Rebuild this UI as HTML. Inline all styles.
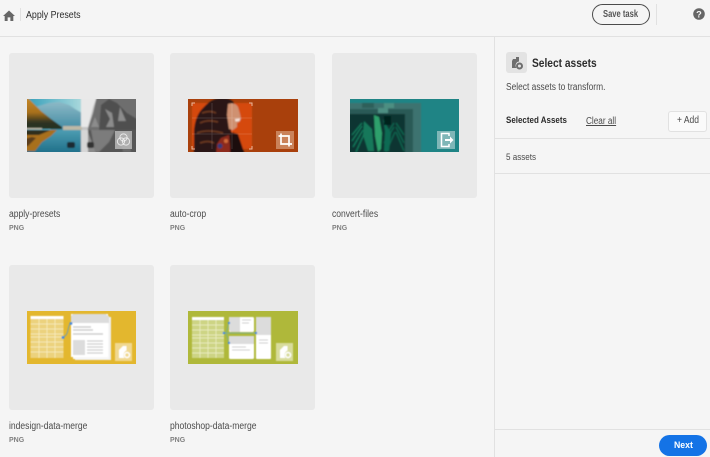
<!DOCTYPE html>
<html><head><meta charset="utf-8"><style>
html,body{margin:0;padding:0;width:710px;height:457px;overflow:hidden;background:#f5f5f5;font-family:"Liberation Sans",sans-serif;color:#2c2c2c}
.a{position:absolute}
.t{position:absolute;white-space:nowrap;line-height:12px;transform-origin:0 50%}
.card{position:absolute;width:145px;height:145px;background:#e9e9e9;border-radius:3px}
.name{position:absolute;white-space:nowrap;font-size:10px;color:#4b4b4b;line-height:12px;transform:scaleX(.855);transform-origin:0 50%}
.png{position:absolute;white-space:nowrap;font-size:7px;font-weight:bold;color:#808080;line-height:10px}
svg{position:absolute;display:block}
</style></head><body>
<div class="a" style="left:0;top:36px;width:710px;height:1px;background:#e1e1e1"></div>
<div class="a" style="left:494px;top:37px;width:1px;height:420px;background:#e1e1e1"></div>
<div class="a" style="left:495px;top:138px;width:215px;height:1px;background:#e1e1e1"></div>
<div class="a" style="left:495px;top:173px;width:215px;height:1px;background:#e1e1e1"></div>
<div class="a" style="left:495px;top:429px;width:215px;height:1px;background:#e1e1e1"></div>
<div class="a" style="left:20px;top:8px;width:1px;height:13px;background:#e1e1e1"></div>
<div class="a" style="left:656px;top:4px;width:1px;height:21px;background:#e1e1e1"></div>

<svg style="left:3px;top:10px" width="12" height="11" viewBox="0 0 13 12"><path d="M6.500 .5L0 6.500h1.800V12h3.200V8h3v4h3.200V6.500H13z" fill="#666"/></svg>
<div class="t" style="left:26px;top:10px;font-size:10px;color:#2c2c2c;transform:scaleX(.885)">Apply Presets</div>

<div class="a" style="left:592px;top:4px;width:56px;height:19px;border:1px solid #4b4b4b;border-radius:11px;background:#f5f5f5"></div>
<div class="t" style="left:603px;top:9px;font-size:10px;font-weight:bold;color:#555;transform:scaleX(.76)">Save task</div>
<svg style="left:693px;top:8px" width="12" height="12" viewBox="0 0 11 11"><circle cx="5.500" cy="5.500" r="5.300" fill="#666"/><text x="5.500" y="8.600" font-family="Liberation Sans" font-size="8.500" font-weight="bold" text-anchor="middle" fill="#f5f5f5">?</text></svg>

<div class="card" style="left:9px;top:53px"></div>
<div class="card" style="left:170px;top:53px"></div>
<div class="card" style="left:332px;top:53px"></div>
<div class="card" style="left:9px;top:265px"></div>
<div class="card" style="left:170px;top:265px"></div>

<!-- apply-presets -->
<svg style="left:27px;top:99px" width="109" height="53" viewBox="0 0 109 53">
<defs><filter id="b1" x="-5%" y="-5%" width="110%" height="110%"><feGaussianBlur stdDeviation=".8"/></filter>
<linearGradient id="sky" x1="0" y1="0" x2="1" y2="0"><stop offset="0" stop-color="#2f9cb8"/><stop offset="1" stop-color="#a9d8dc"/></linearGradient>
<linearGradient id="mt" x1="0" y1="0" x2="0" y2="1"><stop offset="0" stop-color="#8db9c6"/><stop offset="1" stop-color="#3f8aa2"/></linearGradient>
<linearGradient id="w1" x1="0" y1="0" x2="0" y2="1"><stop offset="0" stop-color="#4c9cb2"/><stop offset="1" stop-color="#1a6a85"/></linearGradient>
<linearGradient id="for" x1="0" y1="0" x2="0" y2="1"><stop offset="0" stop-color="#c98a24"/><stop offset=".5" stop-color="#a8701e"/><stop offset=".8" stop-color="#2e3320"/><stop offset="1" stop-color="#23301f"/></linearGradient>
<clipPath id="c1"><rect width="109" height="53"/></clipPath></defs>
<g clip-path="url(#c1)"><g filter="url(#b1)">
<rect x="-3" y="-3" width="58" height="60" fill="url(#sky)"/>
<rect x="54" y="-3" width="58" height="60" fill="#c4c4c4"/>
<path d="M8 8L22 4 32 3l10 3 6 4 7 4v17H24z" fill="url(#mt)"/>
<path d="M-3-3L2 0 14 12 24 20 35 28V30H-3z" fill="url(#for)"/>
<rect x="-3" y="29" width="18" height="1.500" fill="#b8b6a6"/>
<rect x="-3" y="31" width="58" height="25" fill="url(#w1)"/>
<path d="M-3 31H30L24 37 15 43 8 52H-3z" fill="#a8701e"/>
<path d="M-3 31H24L12 36H-3z" fill="#2f2f1f"/>
<path d="M-3 40l8-2 4 1-8 8H-3z" fill="#5a3d1a"/>
<path d="M36 27h19v4H36z" fill="#bdb8a6"/>
<path d="M54-3h16L66 8l-5 20h-7z" fill="#e8e8e8"/>
<path d="M70-3h42v36H60L62 26 66 14z" fill="#6e6e6e"/>
<path d="M74 6l8-6 8 4 10 10 10 6v12H72z" fill="#4f4f4f"/>
<path d="M78 10l5 10-4 8 8 0-2-14zM93 8l6 14h-8zM68 18l4 10h-8z" fill="#8c8c8c"/>
<rect x="54" y="31" width="58" height="25" fill="#8b8b8b"/>
<path d="M60 31h52v25H70z" fill="#565656"/>
<path d="M64 31h24l-6 12-10 10h-4z" fill="#7c7c7c"/>
<path d="M92 33l4 20h8l-2-20z" fill="#6a6a6a"/>
<rect x="54" y="31" width="7" height="25" fill="#d6d6d6"/>
<rect x="40" y="43" width="8" height="6" rx="2" fill="#1c2b33"/>
<rect x="60" y="43" width="7" height="6" rx="2" fill="#333"/>
</g>
<rect x="88" y="32" width="17" height="18" fill="#c9c9c9" fill-opacity=".72"/>
<g fill="none" stroke="#fff" stroke-opacity=".7" stroke-width="1"><circle cx="96.500" cy="38.500" r="3.600"/><circle cx="94" cy="42.500" r="3.600"/><circle cx="99" cy="42.500" r="3.600"/></g>
</g></svg>

<!-- auto-crop -->
<svg style="left:188px;top:99px" width="110" height="53" viewBox="0 0 110 53">
<defs><filter id="b2" x="-5%" y="-5%" width="110%" height="110%"><feGaussianBlur stdDeviation=".9"/></filter><clipPath id="c2"><rect width="110" height="53"/></clipPath></defs>
<g clip-path="url(#c2)">
<rect width="110" height="53" fill="#a9400c"/>
<g filter="url(#b2)">
<rect x="4" y="4" width="60" height="46" fill="#d5480f"/>
<path d="M6 56V32Q7 16 16 8 24-1 34-1q9 0 12 5l-3 14 0 14 3 24z" fill="#2a1512"/>
<path d="M12 24q8-4 18-1M9 34q10-4 26 0M14 14q8-3 14 0M12 44q8-3 14 0" stroke="#6e3a22" stroke-width="1.500" fill="none"/>
<path d="M40 5q7-2 10 3l2 7 1 5-2 3-2 1 0 4-4 3-4-1-2-14z" fill="#cf9171"/>
<path d="M47 20l5-.5-.5 2.500-4 .5z" fill="#f6e4dc"/>
<path d="M28 56l1-11 4-6 8-3 2 20z" fill="#8c2a1e"/>
<path d="M43 33l7 2 7 21H42z" fill="#1d0e0d"/>
<circle cx="32" cy="47" r="2.500" fill="#363a78"/><circle cx="38" cy="42" r="2" fill="#d06a3a"/>
</g>
<g stroke="#fff" stroke-opacity=".18" stroke-width=".8" fill="none"><path d="M4 19h60M4 35h60M24 4v46M44 4v46"/></g>
<g stroke="#f3cdb8" stroke-width="1" fill="none" opacity=".85"><path d="M4 7V4h3M61 4h3v3M4 47v3h3M61 50h3v-3"/></g>
<rect x="88" y="32" width="18" height="18" fill="#d08e68" fill-opacity=".85"/>
<path d="M93 34.500V45h11M90.500 37H101v10.500" fill="none" stroke="#fff" stroke-width="1.700"/>
</g></svg>

<!-- convert-files -->
<svg style="left:350px;top:99px" width="109" height="53" viewBox="0 0 109 53">
<defs><filter id="b3" x="-5%" y="-5%" width="110%" height="110%"><feGaussianBlur stdDeviation=".7"/></filter><clipPath id="c3"><rect width="109" height="53"/></clipPath></defs>
<g clip-path="url(#c3)">
<rect width="109" height="53" fill="#1f8485"/>
<g filter="url(#b3)">
<rect x="-3" y="4" width="74" height="52" fill="#3d7370"/>
<rect x="-3" y="10" width="66" height="46" fill="#2a5a56"/>
<rect x="-3" y="15" width="58" height="41" fill="#0b3430"/>
<g fill="none" stroke-width="1.300" stroke="#127a5c">
<path d="M12 24L2 36M12 27L2 42M13 31L3 48M14 35L6 53M14 24L20 36M14 28L22 42M14 33L22 50"/>
<path d="M44 24L36 36M44 28L34 44M45 33L36 53M46 24L54 36M46 28L54 44M46 33L54 52" stroke="#0e6650"/>
</g>
<path d="M24 16l5 2 3 16-1 16-3 3-3-16z" fill="#2ea06c"/>
<path d="M14 22l8 8 2 22h-6l-5-16z" fill="#14785a"/>
<path d="M33 20l2 12-1 20h5l2-18z" fill="#0f6a52"/>
<rect x="34" y="17" width="7" height="9" fill="#06201e"/>
<rect x="34" y="4" width="10" height="5" fill="#4d8f82"/>
<rect x="12" y="4" width="12" height="5" fill="#2f5f5a"/>
<rect x="28" y="9" width="10" height="5" fill="#4d8f82"/>
</g>
<rect x="87" y="32" width="18" height="18" fill="#7fb6b7"/>
<path d="M99 37v-2.500h-7.500v13H99V45" fill="none" stroke="#fff" stroke-width="1.500"/>
<path d="M95 40h5v-2.500l3.500 3.500-3.500 3.500V42h-5z" fill="#fff"/>
</g></svg>

<!-- indesign -->
<svg style="left:27px;top:311px" width="109" height="53" viewBox="0 0 109 53">
<defs><filter id="b4" x="-5%" y="-5%" width="110%" height="110%"><feGaussianBlur stdDeviation=".45"/></filter></defs>
<rect width="109" height="53" fill="#e3b72e"/>
<g filter="url(#b4)">
<rect x="3.500" y="5" width="33" height="42" fill="#ecd27d"/>
<rect x="3.500" y="5" width="33" height="3" fill="#fff"/>
<g stroke="#f8eec5" stroke-width=".7"><path d="M3.500 13h33M3.500 18h33M3.500 23h33M3.500 26h33M3.500 31h33M3.500 36h33M3.500 41h33M12 8v39M20 8v39M28 8v39"/></g>
<rect x="48" y="6" width="36" height="43" fill="#efefef"/>
<rect x="46" y="5" width="36" height="43" fill="#f8f8f8"/>
<rect x="44" y="3" width="37" height="43" fill="#fff"/>
<path d="M46 3h33l3 3v6H44V5z" fill="#dcdcdc"/>
<path d="M46 16h18M46 19h20M46 23h30" stroke="#cdcdcd" stroke-width="1.500"/>
<rect x="46" y="29" width="12" height="15" fill="#dcdcdc"/>
<path d="M60 30h16M60 33h16M60 36h16M60 39h16M60 42h16" stroke="#cfcfcf" stroke-width="1.200"/>
<path d="M36 26q4-1 5-7t3-7" fill="none" stroke="#7c9ea2" stroke-width="1"/>
<circle cx="36" cy="26.500" r="1.500" fill="#4a8edb"/><circle cx="44" cy="12.500" r="1.500" fill="#4a8edb"/>
<rect x="88" y="32" width="17" height="18" fill="#f0d88f"/>
<path d="M92 47V39l4-4h3.500V39.500a5 5 0 0 0-2 7.500z" fill="#fff"/>
<circle cx="100" cy="44" r="2.500" fill="none" stroke="#fff" stroke-width="1.500"/>
</g>
</svg>

<!-- photoshop -->
<svg style="left:188px;top:311px" width="110" height="53" viewBox="0 0 110 53">
<defs><filter id="b5" x="-5%" y="-5%" width="110%" height="110%"><feGaussianBlur stdDeviation=".45"/></filter></defs>
<rect width="110" height="53" fill="#afb83a"/>
<g filter="url(#b5)">
<rect x="4" y="6" width="32" height="41" fill="#cdd484"/>
<rect x="4" y="6" width="32" height="3" fill="#fff"/>
<g stroke="#eef0c8" stroke-width=".7"><path d="M4 14h32M4 19h32M4 24h32M4 27h32M4 32h32M4 37h32M4 42h32M12 9v38M20 9v38M28 9v38"/></g>
<rect x="41" y="6" width="25" height="15" rx="1.500" fill="#fff"/>
<path d="M41 6h11v15l-9 0-2-2z" fill="#dcdcdc"/>
<path d="M54 9h9M54 12h7" stroke="#cfcfcf" stroke-width="1"/>
<rect x="41" y="25" width="25" height="23" rx="1.500" fill="#fff"/>
<path d="M41 25h25v8H41z" fill="#dcdcdc"/>
<path d="M44 36h14M44 39h18" stroke="#cfcfcf" stroke-width="1"/>
<rect x="68" y="6" width="15" height="42" rx="1" fill="#fff"/>
<rect x="68" y="6" width="15" height="18" fill="#dcdcdc"/>
<path d="M71 29h9M71 32h9" stroke="#cfcfcf" stroke-width="1"/>
<path d="M36 22h32M36 22h2l3-10M38 22l3 10" fill="none" stroke="#7bb088" stroke-width=".9"/>
<circle cx="36" cy="22" r="1.300" fill="#4a8edb"/><circle cx="41" cy="12" r="1.200" fill="#4a8edb"/><circle cx="41" cy="32" r="1.200" fill="#4a8edb"/><circle cx="68" cy="22" r="1.200" fill="#4a8edb"/>
<rect x="88" y="32" width="17" height="18" fill="#d8dc9b"/>
<path d="M92 47V39l4-4h3.500V39.500a5 5 0 0 0-2 7.500z" fill="#fff"/>
<circle cx="100" cy="44" r="2.500" fill="none" stroke="#fff" stroke-width="1.500"/>
</g>
</svg>

<div class="name" style="left:9px;top:209px">apply-presets</div><div class="png" style="left:9px;top:224px">PNG</div>
<div class="name" style="left:170px;top:209px">auto-crop</div><div class="png" style="left:170px;top:224px">PNG</div>
<div class="name" style="left:332px;top:209px">convert-files</div><div class="png" style="left:332px;top:224px">PNG</div>
<div class="name" style="left:9px;top:421px">indesign-data-merge</div><div class="png" style="left:9px;top:436px">PNG</div>
<div class="name" style="left:170px;top:421px">photoshop-data-merge</div><div class="png" style="left:170px;top:436px">PNG</div>

<!-- right panel -->
<div class="a" style="left:506px;top:52px;width:21px;height:21px;background:#e3e3e3;border-radius:3px"></div>
<svg style="left:511px;top:56px" width="12" height="14" viewBox="0 0 12 14"><path d="M2 3h3V1h3v4.500A4 4 0 0 0 5.500 12H1V5z" fill="#6e6e6e"/><circle cx="8.500" cy="10" r="2.500" fill="none" stroke="#6e6e6e" stroke-width="2"/></svg>
<div class="t" style="left:532px;top:57px;font-size:12px;font-weight:bold;color:#2c2c2c;transform:scaleX(.85)">Select assets</div>
<div class="t" style="left:506px;top:82px;font-size:10px;color:#4b4b4b;transform:scaleX(.84)">Select assets to transform.</div>
<div class="t" style="left:506px;top:115px;font-size:9.500px;font-weight:bold;color:#2c2c2c;transform:scaleX(.84)">Selected Assets</div>
<div class="t" style="left:586px;top:116px;font-size:10px;color:#4b4b4b;transform:scaleX(.82);text-decoration:underline">Clear all</div>
<div class="a" style="left:668px;top:111px;width:37px;height:19px;background:#fafafa;border:1px solid #e1e1e1;border-radius:3px"></div>
<div class="t" style="left:677px;top:115px;font-size:10px;color:#4b4b4b;transform:scaleX(.85)">+ Add</div>
<div class="t" style="left:506px;top:152px;font-size:9.500px;color:#4b4b4b;transform:scaleX(.85)">5 assets</div>
<div class="a" style="left:659px;top:435px;width:48px;height:21px;background:#1473e6;border-radius:11px"></div>
<div class="t" style="left:674px;top:440px;font-size:9.500px;font-weight:bold;color:#fff;transform:scaleX(.92)">Next</div>
</body></html>
